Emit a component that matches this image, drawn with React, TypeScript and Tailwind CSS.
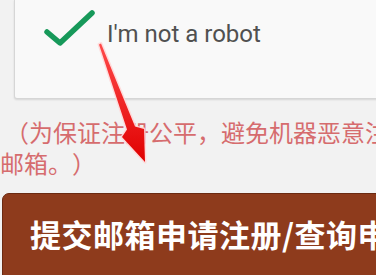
import React from "react";

const cjk = { fontFamily: '"Noto Sans CJK SC", "Noto Sans", sans-serif' };

export default function App() {
  return (
    <div className="relative w-[376px] h-[275px] overflow-hidden bg-[#f2f2f2]">
      {/* captcha box */}
      <div className="ml-[14px] w-[400px] h-[99px] bg-[#f9f9f9] border border-t-0 border-[#d6d6d6] rounded-bl-[3px] shadow-[0_1px_2px_rgba(0,0,0,0.12)] flex items-start">
        <svg width="52" height="40" viewBox="0 0 52 40" className="ml-[28px] mt-[9px] shrink-0">
          <polyline
            points="4,23 17,34 49,4"
            fill="none"
            stroke="#17995a"
            strokeWidth="5.5"
            strokeLinecap="round"
            strokeLinejoin="round"
          />
        </svg>
        <div
          className="ml-[12px] mt-[20px] text-[24px] leading-[28px] text-[#505050]"
          style={{ fontFamily: "Roboto, Arial, sans-serif" }}
        >
          I'm not a robot
        </div>
      </div>

      {/* note */}
      <div
        className="mt-[17px] text-[24px] leading-[31px] text-[#d66c6e] whitespace-nowrap [text-spacing-trim:space-all]"
        style={cjk}
      >
        <div className="pl-[5px]">（为保证注册公平，避免机器恶意注册，请先完成人机验证后再提交</div>
        <div>邮箱。）</div>
      </div>

      {/* submit */}
      <div
        className="ml-[2px] mt-[15px] w-[430px] h-[100px] bg-[#8e3b1c] border border-[#6b2a12] rounded-[7px] pl-[27px] pt-[20px] text-white font-bold text-[31px] leading-[40px] tracking-[0.5px] whitespace-nowrap"
        style={cjk}
      >
        提交邮箱申请注册/查询申请状态
      </div>

      {/* red arrow */}
      <svg className="absolute inset-0 pointer-events-none" width="376" height="275" viewBox="0 0 376 275">
        <defs>
          <linearGradient id="ar" x1="0" y1="0" x2="0" y2="1">
            <stop offset="0" stopColor="#ff4a4a" />
            <stop offset="1" stopColor="#e00000" />
          </linearGradient>
        </defs>
        <polygon
          points="99,44.4 101,43.6 135,126.6 144,129 145,162 122,137 127,129.4"
          fill="none"
          stroke="#ffd6d6"
          strokeWidth="3"
          strokeLinejoin="round"
          opacity="0.85"
        />
        <polygon
          points="99,44.4 101,43.6 135,126.6 144,129 145,162 122,137 127,129.4"
          fill="url(#ar)"
        />
      </svg>
    </div>
  );
}
